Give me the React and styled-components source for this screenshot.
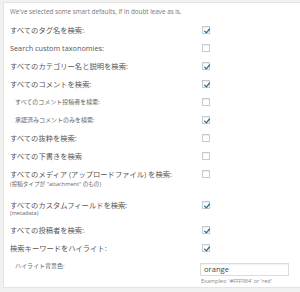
import React from 'react';
import styled, { createGlobalStyle } from 'styled-components';

const Global = createGlobalStyle`
  html, body { margin: 0; padding: 0; background: #f1f1f1; }
  body { font-family: "Open Sans", "Noto Sans CJK JP", sans-serif; }
`;

const Panel = styled.div`
  margin: 2px 0 0 3px;
  background: #fff;
  border-top: 1px solid #e4e4e4;
  border-left: 1px solid #e4e4e4;
  border-bottom: 1px solid #e4e4e4;
  padding: 4px 0 0 6px;
`;

const Intro = styled.p`
  margin: 0 0 4px;
  font-size: 6.3px;
  line-height: 10px;
  color: #777;
`;

const Row = styled.div`
  display: grid;
  grid-template-columns: 190px 1fr;
  align-items: start;
  padding: 4px 0 ${(p) => p.$pb ?? 4}px;
`;

const Label = styled.div`
  padding-left: ${(p) => (p.$indent ? 5 : 0)}px;
  font-size: ${(p) => (p.$indent ? 6 : 7.3)}px;
  line-height: 10px;
  color: ${(p) => (p.$indent ? '#666' : '#555')};
  white-space: nowrap;
`;

const Sub = styled.div`
  margin-top: ${(p) => p.$mt ?? 1}px;
  font-size: 5.6px;
  line-height: ${(p) => p.$lh ?? 8}px;
  color: #666;
  white-space: nowrap;
`;

const Control = styled.div`
  display: flex;
  flex-direction: column;
`;

const Box = styled.span`
  display: block;
  box-sizing: border-box;
  width: 8px;
  height: 8px;
  margin: 1px 0 0 2px;
  border: 1px solid #c8cbce;
  background: #fff;
  box-shadow: inset 0 1px 1px rgba(0, 0, 0, 0.07);
  position: relative;
  svg {
    position: absolute;
    left: -1px;
    top: -1px;
  }
`;

const TextInput = styled.div`
  box-sizing: border-box;
  width: 89px;
  height: 13px;
  margin-top: 2px;
  border: 1px solid #dcdcdc;
  box-shadow: inset 0 1px 1px rgba(0, 0, 0, 0.05);
  padding-left: 3px;
  font-size: 7.6px;
  line-height: 11px;
  color: #444;
`;

const Hint = styled.div`
  margin: 2px 0 0 1px;
  font-size: 5.5px;
  line-height: 7px;
  color: #888;
`;

const Check = ({ on }) => (
  <Box>
    {on && (
      <svg width="10" height="10" viewBox="0 0 10 10">
        <path d="M2.7 5.2 L4.4 6.9 L7.5 3" fill="none" stroke="#2f7199" strokeWidth="1.3" strokeLinecap="round" strokeLinejoin="round" />
      </svg>
    )}
  </Box>
);

const rows = [
  { label: 'すべてのタグ名を検索:', on: true },
  { label: 'Search custom taxonomies:', on: false },
  { label: 'すべてのカテゴリー名と説明を検索:', on: true },
  { label: 'すべてのコメントを検索:', on: true },
  { label: 'すべてのコメント投稿者を検索:', on: false, indent: true },
  { label: '承認済みコメントのみを検索:', on: true, indent: true },
  { label: 'すべての抜粋を検索:', on: false },
  { label: 'すべての下書きを検索', on: false },
  { label: 'すべてのメディア (アップロードファイル) を検索:', on: false, sub: '(投稿タイプが "attachment" のもの)', pb: 8, mt: 1, lh: 8 },
  { label: 'すべてのカスタムフィールドを検索:', on: true, sub: '(metadata)', pb: 5, mt: 0, lh: 6 },
  { label: 'すべての投稿者を検索:', on: true },
  { label: '検索キーワードをハイライト:', on: true },
];

export default function App() {
  return (
    <>
      <Global />
      <Panel>
        <Intro>We've selected some smart defaults, if in doubt leave as is.</Intro>
        {rows.map((r) => (
          <Row key={r.label} $pb={r.pb}>
            <div>
              <Label $indent={r.indent}>{r.label}</Label>
              {r.sub && (
                <Sub $mt={r.mt} $lh={r.lh}>
                  {r.sub}
                </Sub>
              )}
            </div>
            <Control>
              <Check on={r.on} />
            </Control>
          </Row>
        ))}
        <Row $pb={2}>
          <Label $indent>ハイライト背景色:</Label>
          <Control>
            <TextInput>orange</TextInput>
            <Hint>Examples: '#FFF984' or 'red'</Hint>
          </Control>
        </Row>
      </Panel>
    </>
  );
}
